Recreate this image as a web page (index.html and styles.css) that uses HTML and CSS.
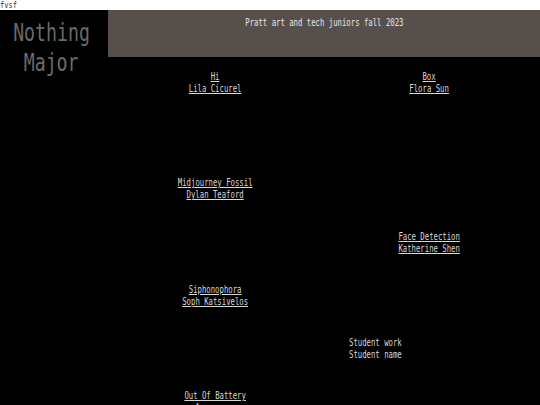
FILE: index.html
```html
<!DOCTYPE html>
<html lang="en">
<head>
<meta charset="utf-8">
<title>Nothing Major</title>
<link rel="stylesheet" href="styles.css">
</head>
<body>
<div class="topline"><span class="squeeze">fvsf</span></div>
<div class="page">
  <aside class="side">
    <h1 class="title"><span class="squeeze">Nothing</span><br><span class="squeeze">Major</span></h1>
  </aside>
  <main class="main">
    <header class="banner"><span class="squeeze">Pratt art and tech juniors fall 2023</span></header>
    <section class="works">
      <a class="work r1 c1" href="#"><span class="squeeze">Hi</span><br><span class="squeeze">Lila Cicurel</span></a>
      <a class="work r1 c2" href="#"><span class="squeeze">Box</span><br><span class="squeeze">Flora Sun</span></a>
      <a class="work r3 c1" href="#"><span class="squeeze">Midjourney Fossil</span><br><span class="squeeze">Dylan Teaford</span></a>
      <a class="work r4 c2" href="#"><span class="squeeze">Face Detection</span><br><span class="squeeze">Katherine Shen</span></a>
      <a class="work r5 c1" href="#"><span class="squeeze">Siphonophora</span><br><span class="squeeze">Soph Katsivelos</span></a>
      <div class="work placeholder r6 c2"><span class="squeeze left">Student work</span><br><span class="squeeze left">Student name</span></div>
      <a class="work r7 c1" href="#"><span class="squeeze">Out Of Battery</span><br><span class="squeeze">Anonymous</span></a>
    </section>
  </main>
</div>
</body>
</html>
```
FILE: styles.css
```css
html, body {
  margin: 0;
  padding: 0;
}
body {
  background: #ffffff;
  font-family: "DejaVu Sans Mono", "Liberation Mono", monospace;
  overflow: hidden;
}
.squeeze {
  display: inline-block;
  transform: scaleX(0.73);
  transform-origin: center;
  white-space: nowrap;
}
.squeeze.left {
  transform-origin: left;
}
.topline {
  height: 10px;
  font-size: 9px;
  line-height: 10px;
  color: #333;
  background: #fff;
}
.topline .squeeze {
  transform-origin: left;
  transform: scaleX(0.78);
}
.page {
  display: grid;
  grid-template-columns: 108px 1fr;
  background: #000;
  height: 395px;
}
.side {
  text-align: center;
  padding-right: 5px;
}
.title {
  margin: 0;
  padding-top: 8px;
  font-weight: normal;
  font-size: 24px;
  line-height: 30px;
  color: #6a6a6a;
}
.title .squeeze {
  transform: scaleX(0.76);
}
.main {
  display: flex;
  flex-direction: column;
}
.banner {
  height: 47px;
  box-sizing: border-box;
  padding-top: 7px;
  background: #574f4c;
  color: #e6e6e6;
  text-align: center;
  font-size: 10px;
  line-height: 12px;
}
.works {
  display: grid;
  grid-template-columns: 1fr 1fr;
  grid-auto-rows: 53.2px;
  padding-top: 14px;
  padding-right: 4px;
}
.work {
  font-size: 10px;
  line-height: 12px;
  color: #d8d8d8;
  text-align: center;
}
a.work .squeeze {
  text-decoration: underline;
  text-decoration-color: #d8d8d8;
}
.placeholder {
  text-align: left;
  padding-left: 27px;
}
.r1 { grid-row: 1; }
.r3 { grid-row: 3; }
.r4 { grid-row: 4; }
.r5 { grid-row: 5; }
.r6 { grid-row: 6; }
.r7 { grid-row: 7; }
.c1 { grid-column: 1; }
.c2 { grid-column: 2; }
```
